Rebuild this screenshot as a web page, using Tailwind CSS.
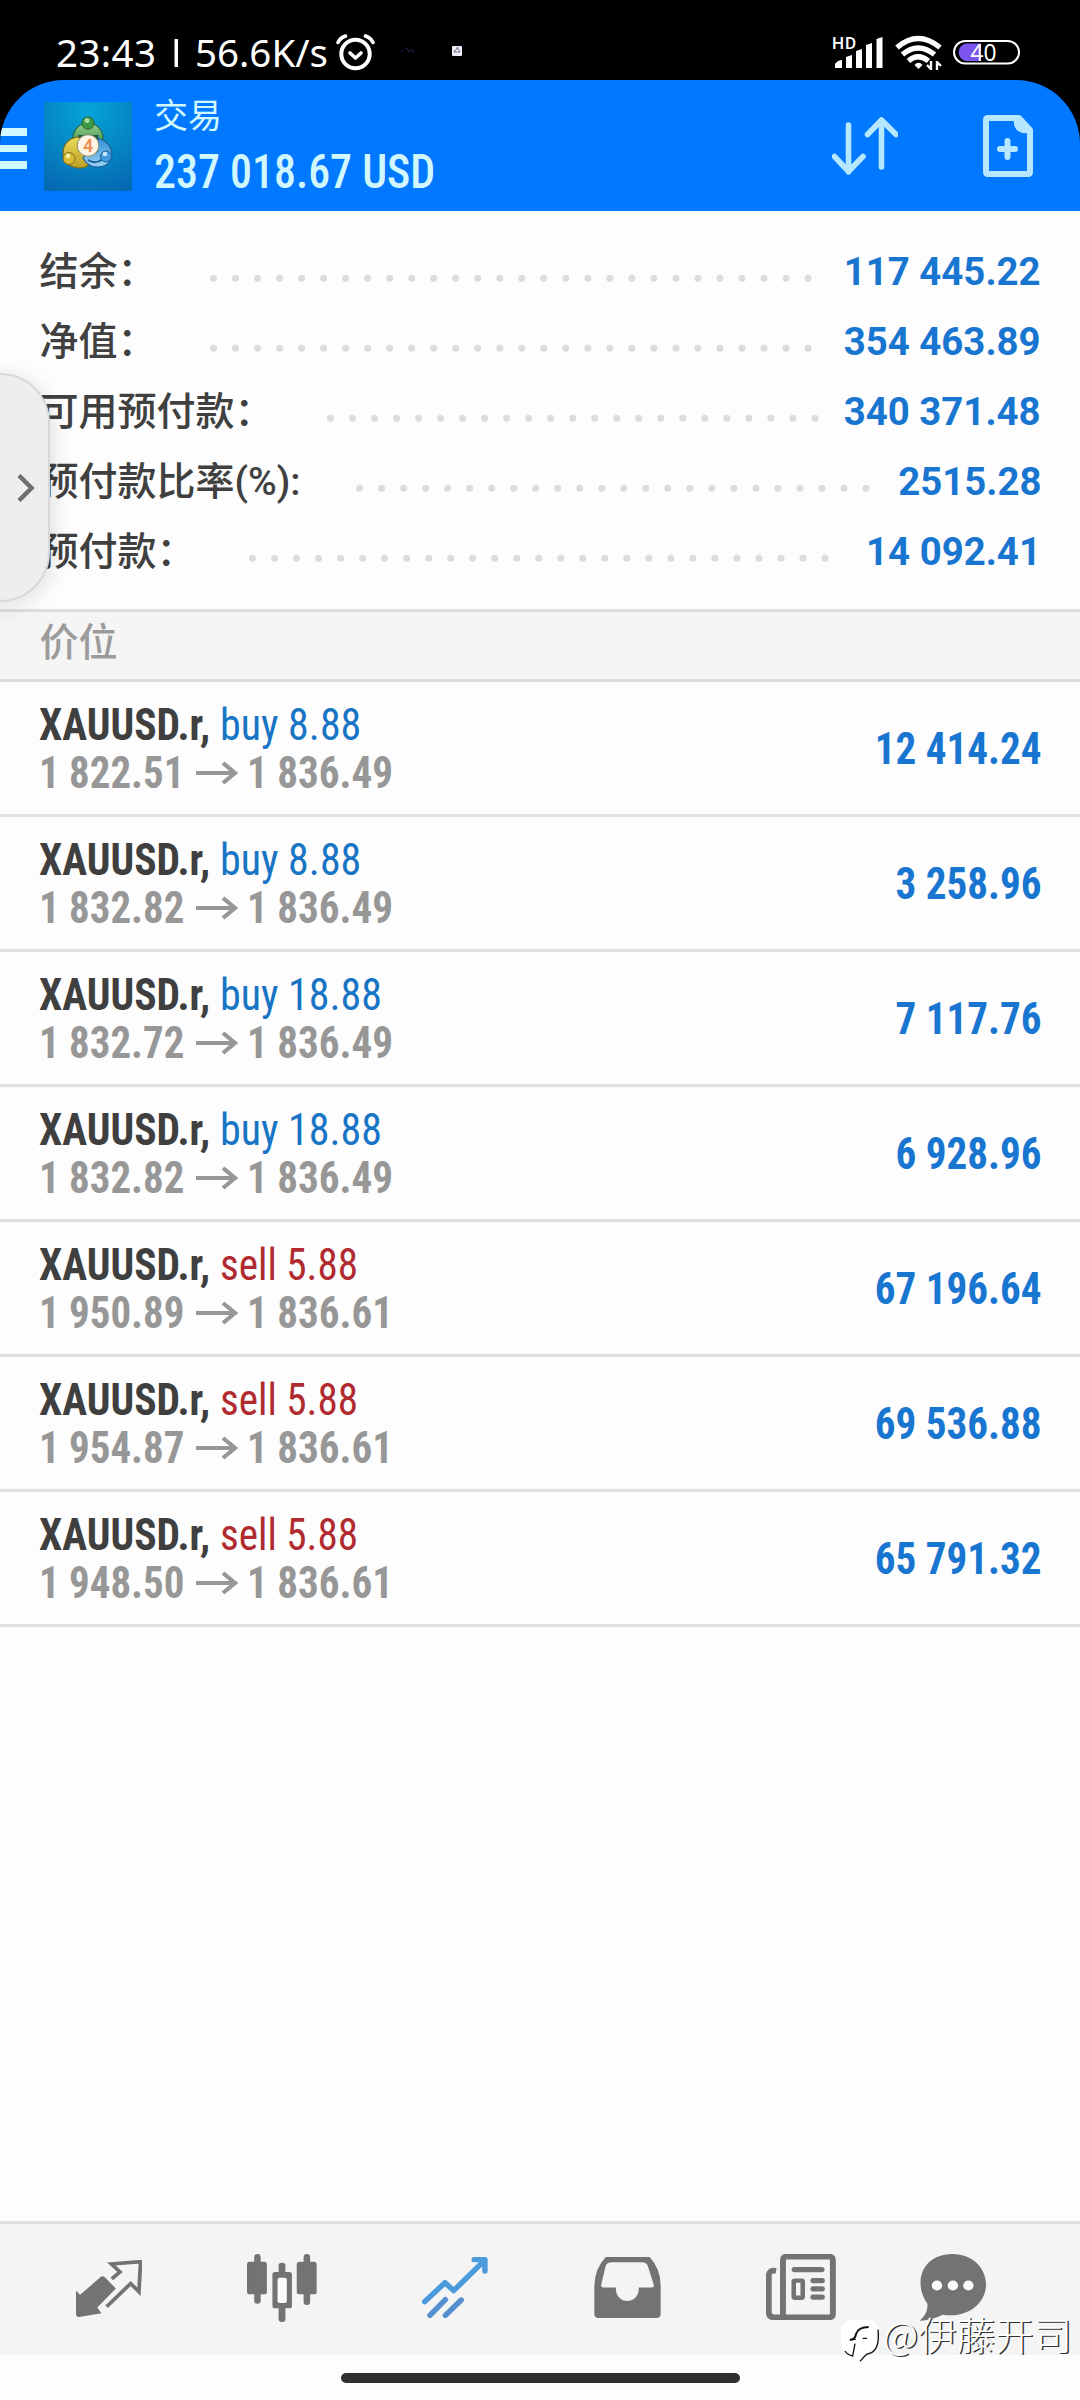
<!DOCTYPE html>
<html lang="zh">
<head>
<meta charset="utf-8">
<title>交易</title>
<script src="https://cdn.jsdelivr.net/npm/@tailwindcss/browser@4"></script>
</head>
<body class="w-[1080px] h-[2400px] overflow-hidden bg-black font-['Roboto','Noto_Sans_CJK_SC',sans-serif]">
<div class="relative flex flex-col w-[1080px] h-[2400px] overflow-hidden">

  <!-- status bar -->
  <div class="flex h-20 shrink-0 items-start text-white">
    <svg class="ml-[56px] mt-[18px] font-['Noto_Sans']" width="275" height="62" viewBox="0 -10 275 62" fill="#fff" font-size="38.500">
      <text x="0" y="39" textLength="100">23:43</text>
      <rect x="118.500" y="11" width="3.500" height="28"/>
      <text x="139" y="39" textLength="133">56.6K/s</text>
    </svg>
    <svg class="mt-[33px] ml-[5px]" width="39" height="38" viewBox="0 0 39 38" fill="none" stroke="#fff" stroke-linecap="round">
      <circle cx="19.5" cy="21" r="14.2" stroke-width="4"/><path d="M14 20l5.5 5 5.5-5" stroke-width="3.6" stroke-linejoin="round"/>
      <path d="M2 9.500Q4 5 9.500 3M37 9.500Q35 5 29.500 3" stroke-width="3.600"/>
    </svg>
    <svg class="mt-[42px] ml-[24px]" width="70" height="20" viewBox="0 0 70 20">
      <path d="M2 9h2M6 6q3 0 4 4l3-3 2 4" stroke="#27235c" fill="none"/>
      <rect x="53" y="4" width="10" height="10" rx="1" fill="#eef"/><path d="M55 10q0-2 2-2 1-3 3 0l1 2zM57 6h3" stroke="#555" stroke-width=".8" fill="none"/>
    </svg>
    <svg class="ml-[363px] mt-[34px]" width="192" height="38" viewBox="0 0 192 38" fill="#fff">
      <text x="0" y="14.500" font-size="17" font-weight="500" textLength="24">HD</text>
      <path d="M3 34V30Q6 26 10 26V34ZM14 34V23L20 21V34ZM24 34V17L30 15V34ZM34 34V11L40 9V34ZM44.500 34V5L50.500 3V34Z"/>
      <g fill="none" stroke="#fff" stroke-width="5.400"><path d="M65 13.500Q86 -4.500 108 13.500"/><path d="M70.500 20.500Q86 7.500 102.500 20.500"/><path d="M76.500 27Q86 18.500 96.500 27"/></g>
      <path d="M82.500 31Q86.500 26.500 90.500 31L86.500 35Z"/>
      <path d="M99 27v9M99 35l-4-4M105 36v-9M105 28l4 4" stroke="#fff" stroke-width="2.400" fill="none"/>
      <rect x="122" y="7" width="65" height="22.500" rx="11.250" fill="none" stroke="#fff" stroke-width="2"/>
      <path d="M149 9.500H133.500a9 9 0 0 0 0 17.500H149Z" fill="#7c54ee"/>
      <text x="138.500" y="27" font-size="24" textLength="26" lengthAdjust="spacingAndGlyphs" font-family="Noto Sans">40</text>
    </svg>
  </div>

  <!-- app bar -->
  <header class="flex h-[131px] shrink-0 items-start overflow-hidden rounded-t-[64px] bg-[#0078ff] text-[#d2f8ff]">
    <div class="mt-[48px] flex w-[27px] flex-col gap-[9px]">
      <i class="h-[7.500px] bg-[#d2f8ff]"></i><i class="h-[7.500px] bg-[#d2f8ff]"></i><i class="h-[7.500px] bg-[#d2f8ff]"></i>
    </div>
    <svg class="ml-[17px] mt-[22px]" width="88" height="89" viewBox="0 0 88 89">
      <defs>
        <radialGradient id="bg" cx=".5" cy=".1" r=".95"><stop offset="0" stop-color="#04a5da"/><stop offset=".55" stop-color="#0586c2"/><stop offset="1" stop-color="#0569b4"/></radialGradient>
        <linearGradient id="g" x2="0" y2="1"><stop offset="0" stop-color="#9bcf93"/><stop offset="1" stop-color="#2f8a44"/></linearGradient>
        <linearGradient id="y" x2="0" y2="1"><stop offset="0" stop-color="#ecd95b"/><stop offset="1" stop-color="#b9a124"/></linearGradient>
        <linearGradient id="b" x2="0" y2="1"><stop offset="0" stop-color="#2f8fd4"/><stop offset="1" stop-color="#9bd4f6"/></linearGradient>
      </defs>
      <rect width="88" height="89" fill="url(#bg)"/>
      <path d="M29 36a15 15 0 0 1 30 0q0 6-3 9H32q-3-3-3-9z" fill="url(#g)" stroke="#24663a" stroke-width="1.200"/>
      <path d="M34 33h21l-3 8H36z" fill="#1d5a41"/>
      <path d="M33 35q-14 3-14 17 2 13 16 14 8 0 10-4L36 36z" fill="url(#y)" stroke="#7b6c1d" stroke-width="1.200"/>
      <path d="M54 36q13 4 14 17-2 12-15 12-9 0-14-9l4-5q8 4 11-3z" fill="url(#b)" stroke="#1d5f96" stroke-width="1.200"/>
      <path d="M44 58q7 5 15-1" fill="none" stroke="#1d5f96" stroke-width="2"/>
      <circle cx="44" cy="21" r="6.200" fill="#3f9a48" stroke="#24663a"/><circle cx="43" cy="18.500" r="2.500" fill="#a5d9a0"/>
      <circle cx="25" cy="56.500" r="6" fill="#d6bb33" stroke="#86711f"/><circle cx="24" cy="54" r="2.400" fill="#f7ee9a"/>
      <circle cx="62" cy="54.500" r="5.500" fill="#3f9ce0" stroke="#1d5f96"/><circle cx="61" cy="52" r="2.300" fill="#c6e8ff"/>
      <circle cx="44" cy="43.500" r="10.800" fill="#fff4e4" stroke="#8a8a66"/>
      <text x="44" y="50" font-size="18" font-weight="500" text-anchor="middle" fill="#f08850">4</text>
    </svg>
    <div class="ml-[22px] w-[678px] whitespace-nowrap">
      <div class="mt-[13px] h-[47px] text-[34px] leading-[46px]">交易</div>
      <div class="h-[64px] text-[47.500px] leading-[64px]"><span class="inline-block origin-left scale-x-[.925] font-['Roboto_Condensed','Roboto'] font-medium font-stretch-75%">237 018.67 USD</span></div>
    </div>
    <svg class="mt-[37px]" width="66" height="60" viewBox="0 0 66 60" fill="none" stroke="#b5e8ff" stroke-width="5.600" stroke-linecap="round" stroke-linejoin="round">
      <path d="M16.500 8V55M2.500 39.500L16.500 54.500 31 39.500M49.500 50V4M35.500 17.500L49.500 3 64 17.500"/>
    </svg>
    <svg class="ml-[85px] mt-[35px]" width="50" height="62" viewBox="0 0 50 62" fill="none" stroke="#b5e8ff" stroke-width="6" stroke-linejoin="round" stroke-linecap="round">
      <path d="M5 3H36L47 15V57Q47 59 45 59H5Q3 59 3 57V5Q3 3 5 3Z"/><path d="M17 34H32M24.500 26V42"/><path d="M31 4Q30 19 46 18V14L37 4Z" fill="#b5e8ff" stroke-width="1"/>
    </svg>
  </header>

  <!-- account summary -->
  <section id="summary" class="flex h-[398px] shrink-0 flex-col bg-[#fdfdfd] pt-[25.500px]"></section>

  <!-- positions -->
  <div class="h-[73px] shrink-0 border-y-[3px] border-[#dedede] bg-[#f5f5f5] pl-[39.500px] text-[39px] leading-[63px] font-medium text-[#9b9b9b]">价位</div>
  <section id="positions" class="flex grow flex-col bg-[#fdfdfd]"></section>

  <!-- bottom navigation -->
  <nav class="grid h-[134px] shrink-0 grid-cols-[173px_173px_173px_173px_173px_131px] justify-items-center border-t-[3px] border-[#dedede] bg-[#f4f4f4] pl-[22px]">
    <svg class="mt-[36px]" width="66" height="57" viewBox="219 179 192 172" preserveAspectRatio="none">
      <path d="M219 272L231 284 289 232Q296 225 303 231L335 265 281 322 293 340 228 351Q219 352 219 342Z" fill="#737373"/>
      <path d="M323 236L347 215 322 191 407 184 402 275 378 250 308 320" fill="none" stroke="#737373" stroke-width="11"/>
    </svg>
    <svg class="mt-[30px]" width="70" height="68" viewBox="714 162 204 204" preserveAspectRatio="none">
      <g fill="#737373"><rect x="714" y="185" width="58" height="98" rx="8"/><rect x="735" y="162" width="19" height="149" rx="9"/><rect x="859" y="185" width="58" height="98" rx="8"/><rect x="879" y="162" width="19" height="153" rx="9"/><rect x="788" y="216" width="57" height="109" rx="8"/><rect x="806" y="188" width="20" height="178" rx="9"/></g><rect x="803" y="233" width="27" height="76" rx="6" fill="#fbfbfb"/>
    </svg>
    <svg class="mt-[33px]" width="66" height="61" viewBox="1222 170 192 183" preserveAspectRatio="none" fill="none" stroke="#4b9adb" stroke-width="16" stroke-linecap="round" stroke-linejoin="round">
      <path d="M1230 304L1289 247 1314 271 1404 180M1374 178H1405V212"/><path d="M1245 345L1290 298M1290 345L1336 299" stroke="#558fd0"/>
    </svg>
    <svg class="mt-[33px]" width="67" height="61" viewBox="158 170 193 182" preserveAspectRatio="none" fill="#737373" fill-rule="evenodd">
      <path d="M192 170H318Q350 205 350 255V340Q350 352 338 352H171Q159 352 159 340V255Q160 205 192 170ZM207 186Q194 187 191 198L179 252Q177 261 186 261H221C218 315 290 315 287 261H324Q333 261 330 252L313 197Q309 186 297 186Z"/>
    </svg>
    <svg class="mt-[30px]" width="70" height="66" viewBox="657 161 202 199" preserveAspectRatio="none" fill="none" stroke="#737373">
      <path d="M686 212Q665 208 665 228V336Q665 352 681 352H840Q850 352 850 341V181Q850 169 840 169H716Q706 169 706 181V350" stroke-width="17"/>
      <path d="M739 208H818M793 241H819M793 266H819M793 291H819" stroke-width="16" stroke-linecap="round"/><rect x="737" y="241" width="26" height="52" rx="3" stroke-width="13"/>
    </svg>
    <svg class="mt-[30px]" width="67" height="67" viewBox="1102 161 194 200" preserveAspectRatio="none">
      <path d="M1126 309C1085 250 1108 161 1199 161C1257 161 1296 203 1296 252C1296 310 1241 354 1170 342Q1140 359 1104 360Q1130 336 1126 309Z" fill="#737373"/>
      <g fill="#fdfdfd"><circle cx="1154" cy="255" r="15"/><circle cx="1200" cy="255" r="15"/><circle cx="1245" cy="255" r="15"/></g>
    </svg>
  </nav>
  <div class="flex h-[45px] shrink-0 justify-center bg-[#fdfdfd] pt-[18px]"><div class="h-[10px] w-[399px] rounded-full bg-[#303030]"></div></div>

  <!-- side handle -->
  <div class="absolute -left-[51px] top-[373px] flex h-[229px] w-[101px] items-center justify-end rounded-[50px] border-2 border-[#d8d8d8] bg-[#eeeeee] pr-[13px] shadow-[2px_4px_22px_rgba(0,0,0,0.13)]">
    <svg width="18" height="28" viewBox="0 0 18 28" fill="none" stroke="#6f6f6f" stroke-width="4.500"><path d="M2 1.500L14.500 14 2 26.500"/></svg>
  </div>

  <!-- watermark -->
  <div class="absolute left-[841px] top-[2314px] flex items-start whitespace-nowrap text-white">
    <svg width="39" height="45" viewBox="34 57 117 135" class="mt-[4px]" fill="none" stroke="#111">
      <path d="M35 90Q40 62 75 62H115Q146 64 147 95Q150 140 125 160L92 186 88 172 72 174Q36 165 35 130Z" fill="#fff" stroke="none"/>
      <path d="M60 122Q76 124 79 105Q86 84 117 84" stroke-width="6"/>
      <path d="M66 121H78M99 118H112M46 156Q54 168 69 171L76 134M145 92Q152 160 112 165Q101 175 91 187" stroke-width="4"/>
    </svg>
    <span class="ml-[3px] text-[38.500px] leading-[48px] -mt-[5px] font-['Noto_Sans_CJK_SC'] font-light text-shadow-[1.5px_1px_0_#333]">@伊藤开司</span>
  </div>
</div>

<script>
  const summary = [
    ['结余：', '117 445.22', 213.5, 28],
    ['净值：', '354 463.89', 213.5, 28],
    ['可用预付款：', '340 371.48', 330.5, 23],
    ['预付款比率(%):', '2515.28', 359.5, 24],
    ['预付款：', '14 092.41', 252.5, 27]
  ];
  document.getElementById('summary').innerHTML = summary.map(([label, value, x, n]) => `
    <div class="grid h-[70px] grid-cols-1 items-center pl-[39.500px] pr-[39px] whitespace-nowrap">
      <div class="col-start-1 row-start-1 text-[39px] leading-[70px] font-medium text-[#404040]">${label}</div>
      <svg class="col-start-1 row-start-1" width="850" height="20" viewBox="40 -17.5 850 20">${Array.from({length: n}, (_, i) => `<circle cx="${x + i * 22.02}" cy="-1.3" r="3.5" fill="#dcdcdc"/>`).join('')}</svg>
      <div class="col-start-1 row-start-1 origin-right scale-x-[.972] justify-self-end text-[39.500px] leading-[70px] font-bold text-[#1976d0]">${value}</div>
    </div>`).join('');

  const positions = [
    ['buy 8.88', '1 822.51', '1 836.49', '12 414.24'],
    ['buy 8.88', '1 832.82', '1 836.49', '3 258.96'],
    ['buy 18.88', '1 832.72', '1 836.49', '7 117.76'],
    ['buy 18.88', '1 832.82', '1 836.49', '6 928.96'],
    ['sell 5.88', '1 950.89', '1 836.61', '67 196.64'],
    ['sell 5.88', '1 954.87', '1 836.61', '69 536.88'],
    ['sell 5.88', '1 948.50', '1 836.61', '65 791.32']
  ];
  document.getElementById('positions').innerHTML = positions.map(([deal, open, now, profit]) => `
    <div class="flex h-[135px] shrink-0 items-center justify-between border-b-[3px] border-[#e0e0e0] pt-[3px] pl-[39px] pr-[38px] whitespace-nowrap font-['Roboto_Condensed','Roboto'] font-stretch-75% text-[43.500px]">
      <div class="flex flex-col">
        <div class="flex h-[48px] leading-[48px]">
          <div class="w-[181px] origin-left scale-x-[.955] font-bold text-[#3f3f3f]">XAUUSD.r,</div>
          <div class="origin-left font-[450] ${deal[0] === 'b' ? 'scale-x-[.965] text-[#1874c4]' : 'scale-x-[.945] text-[#b02a30]'}">${deal}</div>
        </div>
        <div class="flex h-[48px] items-center leading-[48px] font-bold text-[#979797]">
          <div class="w-[157px] origin-left scale-x-[.94]">${open}</div>
          <svg class="w-[51px]" width="51" height="26" viewBox="0 0 51 26" fill="none" stroke="#979797" stroke-width="4.200"><path d="M0 12H40M27 2L39 12 27 22"/></svg>
          <div class="origin-left scale-x-[.945]">${now}</div>
        </div>
      </div>
      <div class="origin-right scale-x-[.945] font-bold text-[#1976d0]">${profit}</div>
    </div>`).join('');
</script>
</body>
</html>
